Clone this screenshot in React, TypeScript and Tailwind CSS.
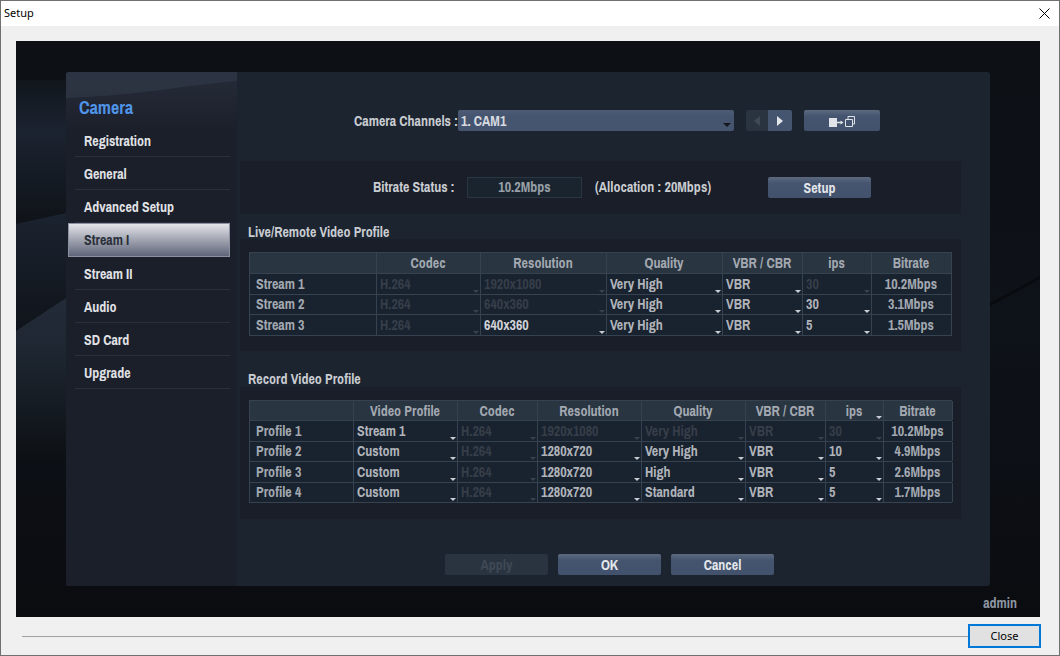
import React from "react"

const narrow = "font-['Archivo_Narrow','Liberation_Sans',sans-serif]"

type Cell = { t: string; w: number; off?: boolean; sel?: boolean; center?: boolean; muted?: boolean }

function Arrow({ off }: { off?: boolean }) {
  return (
    <span className={`absolute right-[1px] bottom-[1px] h-0 w-0 border-x-[3px] border-t-[3px] border-x-transparent ${off ? "border-t-[#39424e]" : "border-t-[#c9ced6]"}`} />
  )
}

function Row({ cells, h }: { cells: Cell[]; h: string }) {
  return (
    <div className={`flex ${h} border-b border-[#364250]`}>
      {cells.map((c, i) => (
        <div
          key={i}
          style={{ width: c.w }}
          className={`relative flex shrink-0 items-center overflow-hidden border-r border-[#364250] first:border-l text-[14px] font-bold leading-none ${c.center ? "justify-center pr-[1px]" : "pl-[3px]"} ${i === 0 ? "pl-[6px]" : ""} ${c.off ? "text-[#363e49]" : c.center || c.muted ? "text-[#a3a9b1]" : c.t === "640x360" ? "text-[#d0d3d7]" : "text-[#b0b4ba]"}`}
        >
          {c.t}
          {c.sel && <Arrow off={c.off} />}
        </div>
      ))}
    </div>
  )
}

const liveW = [128, 104, 126, 116, 80, 69, 80]
const liveRows: [string, string, string, string, string, string, string, boolean[]][] = [
  ["Stream 1", "H.264", "1920x1080", "Very High", "VBR", "30", "10.2Mbps", [true, true, false, false, true]],
  ["Stream 2", "H.264", "640x360", "Very High", "VBR", "30", "3.1Mbps", [true, true, false, false, false]],
  ["Stream 3", "H.264", "640x360", "Very High", "VBR", "5", "1.5Mbps", [true, false, false, false, false]],
]

const recW = [105, 104, 80, 104, 104, 80, 58, 69]
const recRows: [string, string, string, string, string, string, string, string, boolean[]][] = [
  ["Profile 1", "Stream 1", "H.264", "1920x1080", "Very High", "VBR", "30", "10.2Mbps", [false, true, true, true, true, true]],
  ["Profile 2", "Custom", "H.264", "1280x720", "Very High", "VBR", "10", "4.9Mbps", [false, true, false, false, false, false]],
  ["Profile 3", "Custom", "H.264", "1280x720", "High", "VBR", "5", "2.6Mbps", [false, true, false, false, false, false]],
  ["Profile 4", "Custom", "H.264", "1280x720", "Standard", "VBR", "5", "1.7Mbps", [false, true, false, false, false, false]],
]

function NvrButton({ label, w, off }: { label: React.ReactNode; w: string; off?: boolean }) {
  return (
    <div
      className={`flex h-[21px] items-center justify-center rounded-[2px] pt-[1px] text-[14px] font-bold ${w} ${off ? "bg-[#2a3441] text-[#3f4955]" : "bg-[linear-gradient(#5c6a80,#45546f_30%,#43526c)] text-[#e3e6ea]"}`}
    >
      {label}
    </div>
  )
}

const menu = ["Registration", "General", "Advanced Setup", "Stream I", "Stream II", "Audio", "SD Card", "Upgrade"]

export default function App() {
  return (
    <div className="flex h-[656px] w-[1060px] flex-col overflow-hidden border border-[#707070] bg-[#f0f0f0] font-['Liberation_Sans',sans-serif]">
      <div className="flex h-[25px] shrink-0 items-center justify-between bg-white pl-[3px] pr-[9px]">
        <span className="font-['Noto_Sans',sans-serif] text-[11px] text-black">Setup</span>
        <svg width="11" height="11" viewBox="0 0 11 11"><path d="M.5.5l10 10M10.5.5l-10 10" stroke="#000" strokeWidth="1" fill="none" /></svg>
      </div>

      <div className="relative mx-[15px] mt-[15px] h-[576px] w-[1024px] shrink-0 overflow-hidden bg-[linear-gradient(#0d1015,#0e1219_50%,#0a0c10)]">
        {/* background shapes behind the dialog */}
        <svg className="absolute inset-0" width="1024" height="576" viewBox="0 0 1024 576">
          <defs>
            <linearGradient id="b1" gradientUnits="userSpaceOnUse" x1="0" y1="39" x2="0" y2="183"><stop offset="0" stopColor="#11161c" /><stop offset=".35" stopColor="#1b2330" /><stop offset="1" stopColor="#0f1318" /></linearGradient>
            <linearGradient id="b2" gradientUnits="userSpaceOnUse" x1="0" y1="172" x2="0" y2="290"><stop offset="0" stopColor="#1b2330" /><stop offset="1" stopColor="#10141a" /></linearGradient>
            <linearGradient id="b3" gradientUnits="userSpaceOnUse" x1="0" y1="257" x2="0" y2="420"><stop offset="0" stopColor="#222b37" /><stop offset=".3" stopColor="#1e2732" /><stop offset="1" stopColor="#0d1014" /></linearGradient>
          </defs>
          <path d="M0 39H50V172L0 183Z" fill="url(#b1)" />
          <path d="M0 183L50 172V257L0 290Z" fill="url(#b2)" />
          <path d="M0 290L50 257V420H0Z" fill="url(#b3)" />
          <path d="M974 262L1024 235L1024 238L974 265Z" fill="#090b0f" />
        </svg>

        <div className={`absolute left-[50px] top-[31px] flex h-[514px] w-[924px] overflow-hidden rounded-[3px] bg-[#1c2430] ${narrow}`}>
          <div className="relative flex w-[171px] shrink-0 flex-col bg-[linear-gradient(#262c39,#1b1f2a_60px)] pl-[2px] pr-[7px]">
            <svg className="absolute left-0 top-0" width="171" height="30" viewBox="0 0 171 30">
              <path d="M0 0H171V9C120 13 70 24 0 26Z" fill="#2e3645" opacity=".8" />
            </svg>
            <div className="relative h-[52px] pl-[11px] pt-[25px] text-[18px] font-bold leading-[22px] text-[#4f94e8]">Camera</div>
            {menu.map((m) =>
              m === "Stream I" ? (
                <div key={m} className="flex h-[34px] items-center border border-[#8b90a2] bg-[linear-gradient(#e2e4e8,#5f6479)] pl-[15px] pt-[1px] text-[14px] font-bold text-[#2a2f3a]">
                  {m}
                </div>
              ) : (
                <div key={m} className="ml-[7px] flex h-[33px] items-center border-b border-[#2a303b] pl-[9px] pt-[2px] text-[14px] font-bold text-[#e0e2e6]">
                  {m}
                </div>
              ),
            )}
          </div>

          <div className="flex min-w-0 flex-1 flex-col pl-[3px]">
            <div className="flex h-[89px] shrink-0 items-start pt-[38px]">
              <span className="ml-[114px] mt-[4px] w-[104px] text-[14px] font-bold leading-[15px] text-[#c9ccd1]">Camera Channels :</span>
              <div className="relative flex h-[21px] w-[276px] items-center rounded-[2px] bg-[linear-gradient(#4e5c75,#45546f_30%)] pl-[3px] pt-[1px] text-[14px] font-bold text-[#d8dbe0]">
                1. CAM1
                <span className="absolute bottom-[4px] right-[3px] h-0 w-0 border-x-[4px] border-t-[4px] border-x-transparent border-t-[#15181e]" />
              </div>
              <div className="ml-[12px] flex h-[21px] w-[22px] items-center justify-center rounded-l-[2px] bg-[#2a3441]">
                <span className="h-0 w-0 border-y-[5px] border-r-[6px] border-y-transparent border-r-[#3f4955]" />
              </div>
              <div className="flex h-[21px] w-[24px] items-center justify-center rounded-r-[2px] bg-[#45546f]">
                <span className="h-0 w-0 border-y-[5px] border-l-[6px] border-y-transparent border-l-[#e3e6ea]" />
              </div>
              <div className="ml-[12px]">
                <NvrButton
                  w="w-[76px]"
                  label={
                    <svg width="26" height="11" viewBox="0 0 26 11">
                      <rect x="0" y="2" width="8" height="9" fill="#dfe2e7" />
                      <path d="M8 6.5h4" stroke="#dfe2e7" strokeWidth="1.5" fill="none" />
                      <path d="M11.5 4.5l3 2-3 2z" fill="#dfe2e7" />
                      <path d="M16.5 3.5h7v7h-7zM19 3V.5h6.5V8H24" stroke="#dfe2e7" fill="none" />
                    </svg>
                  }
                />
              </div>
            </div>

            <div className="flex h-[53px] w-[721px] shrink-0 items-center bg-[#191e28]">
              <span className="ml-[133px] w-[94px] text-[14px] font-bold text-[#c9ccd1]">Bitrate Status :</span>
              <div className="flex h-[21px] w-[115px] items-center justify-center border border-[#2b3644] bg-[#19242f] text-[14px] font-bold text-[#98a0a8]">10.2Mbps</div>
              <span className="ml-[13px] w-[173px] text-[14px] font-bold text-[#c9ccd1]">(Allocation : 20Mbps)</span>
              <NvrButton label="Setup" w="w-[103px]" />
            </div>

            <div className="h-[25px] shrink-0 pl-[8px] pt-[10px] text-[14px] font-bold leading-[16px] text-[#c9ccd1]">Live/Remote Video Profile</div>
            <div className="h-[112px] w-[721px] shrink-0 bg-[#191e28] pl-[9px] pt-[13px]">
              <div className="w-[703px] border-t border-[#364250] bg-[#19222f]">
                <div className="bg-[#2a3542]">
                  <Row h="h-[21px]" cells={["", "Codec", "Resolution", "Quality", "VBR / CBR", "ips", "Bitrate"].map((t, i) => ({ t, w: liveW[i], center: true }))} />
                </div>
                {liveRows.map((r) => (
                  <Row
                    key={r[0]}
                    h="h-[20.5px]"
                    cells={[
                      { t: r[0], w: liveW[0], muted: true },
                      ...[1, 2, 3, 4, 5].map((k) => ({ t: r[k] as string, w: liveW[k], sel: true, off: r[7][k - 1] })),
                      { t: r[6], w: liveW[6], center: true },
                    ]}
                  />
                ))}
              </div>
            </div>

            <div className="h-[36px] shrink-0 pl-[8px] pt-[20px] text-[14px] font-bold leading-[16px] text-[#c9ccd1]">Record Video Profile</div>
            <div className="h-[132px] w-[721px] shrink-0 bg-[#191e28] pl-[9px] pt-[13px]">
              <div className="w-[703px] border-t border-[#364250] bg-[#19222f]">
                <div className="bg-[#2a3542] pb-0">
                  <Row h="h-[20px]" cells={["", "Video Profile", "Codec", "Resolution", "Quality", "VBR / CBR", "ips", "Bitrate"].map((t, i) => ({ t, w: recW[i], center: true, sel: t === "ips" }))} />
                </div>
                {recRows.map((r) => (
                  <Row
                    key={r[0]}
                    h="h-[20.5px]"
                    cells={[
                      { t: r[0], w: recW[0], muted: true },
                      ...[1, 2, 3, 4, 5, 6].map((k) => ({ t: r[k] as string, w: recW[k], sel: true, off: r[8][k - 1] })),
                      { t: r[7], w: recW[7], center: true },
                    ]}
                  />
                ))}
              </div>
            </div>

            <div className="flex gap-[10px] pl-[205px] pt-[35px]">
              <NvrButton label="Apply" w="w-[103px]" off />
              <NvrButton label="OK" w="w-[103px]" />
              <NvrButton label="Cancel" w="w-[103px]" />
            </div>
          </div>
        </div>

        <span className={`absolute bottom-[3px] right-[23px] text-[14px] font-bold text-[#8e96a3] ${narrow}`}>admin</span>
      </div>

      <div className="mt-[7px] flex items-center pl-[21px] pr-[18px]">
        <div className="h-px flex-1 bg-[#a0a0a0]" />
        <div className="flex h-[24px] w-[73px] items-center justify-center border-2 border-[#0078d7] bg-[#e1e1e1] font-['Noto_Sans',sans-serif] text-[11px] text-black">Close</div>
      </div>
    </div>
  )
}
